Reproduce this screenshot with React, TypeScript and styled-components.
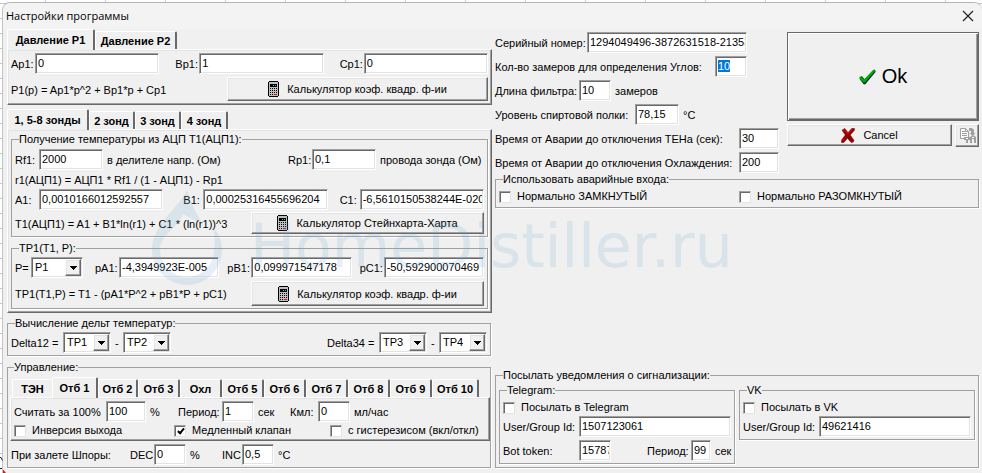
import React, { useEffect, useId, useRef } from "react";
import styled, { createGlobalStyle, css } from "styled-components";

const Global = createGlobalStyle`
  *, *::before, *::after { box-sizing: border-box; }
  body {
    margin: 0;
    background: #fff;
    color: #000;
    font: 11px/13px "Liberation Sans", Arial, sans-serif;
  }
  ::selection { background: #0078d7; color: #fff; }
`;

const raised = css`
  border: 1px solid;
  border-color: #fff #696969 #696969 #fff;
  box-shadow: inset -1px -1px 0 #a0a0a0, inset 1px 1px 0 #e3e3e3;
`;

const sunken = css`
  border: 1px solid;
  border-color: #a0a0a0 #fff #fff #a0a0a0;
  box-shadow: inset 1px 1px 0 #696969, inset -1px -1px 0 #e3e3e3;
`;

const Sheet = styled.div`
  position: relative;
  min-height: 100vh;
  padding: 2px 0 0 2px;
  overflow: hidden;
  background-color: #fff;
  background-image:
    repeating-linear-gradient(90deg, transparent 0 45px, #d0d0d0 45px 46px, transparent 46px 60px),
    repeating-linear-gradient(180deg, transparent 0 3px, #c8c8c8 3px 4px, transparent 4px 15px);
`;

const SheetChart = styled.svg`
  position: absolute;
  left: 0;
  bottom: 0;
`;

const Dialog = styled.main`
  position: relative;
  min-height: calc(100vh - 2px);
  background: #f0f0f0;
  border-top: 1px solid #b4b4b4;
  border-left: 1px solid #c4c4c4;
  border-radius: 8px 8px 0 0;
`;

const TitleBar = styled.header`
  display: flex;
  align-items: center;
  justify-content: space-between;
  height: 26px;
  padding: 0 8px 0 3px;
  background: #f3f3f3;
  border-radius: 8px 8px 0 0;
`;

const Title = styled.h1`
  margin: 0;
  font: 400 11px/16px "Open Sans", "Noto Sans", sans-serif;
`;

const CloseButton = styled.button`
  display: flex;
  padding: 0;
  border: 0;
  background: none;
`;

const Body = styled.form`
  display: grid;
  grid-template-columns: minmax(0, 1fr) minmax(0, 1fr);
  gap: 4px;
  padding: 0 3px 4px 4px;
`;

const Column = styled.div`
  display: flex;
  flex-direction: column;
  min-width: 0;
`;

const TabStrip = styled.div<{ $inset?: boolean }>`
  display: flex;
  align-items: flex-end;
  height: 20px;
  padding-left: ${(p) => (p.$inset ? 2 : 0)}px;
  margin-top: ${(p) => (p.$inset ? 3 : 0)}px;
`;

const TabButton = styled.button<{ $active?: boolean; $width: number; $flat?: boolean }>`
  position: relative;
  flex: 0 0 ${(p) => p.$width}px;
  height: ${(p) => (p.$active ? 21 : 18)}px;
  margin-bottom: ${(p) => (p.$active ? -1 : 0)}px;
  padding: 0;
  z-index: ${(p) => (p.$active ? 1 : 0)};
  background: #f0f0f0;
  border: 0 solid;
  border-width: 1px ${(p) => (p.$flat ? 0 : 2)}px 0 1px;
  border-color: #fff #696969 #fff #fff;
  border-radius: 2px 2px 0 0;
  color: #000;
  font: 700 11px/14px "Liberation Sans", Arial, sans-serif;
  white-space: nowrap;
`;

const Page = styled.div<{ $narrow?: boolean }>`
  ${raised}
  display: flex;
  flex-direction: column;
  padding: 3px;
  margin-right: ${(p) => (p.$narrow ? 0 : -1)}px;
`;

const Group = styled.fieldset<{ $gap?: number; $pad?: string }>`
  min-width: 0;
  margin: ${(p) => p.$gap ?? 0}px 0 0;
  padding: ${(p) => p.$pad ?? "2px 3px"};
  border: 1px solid #a0a0a0;
  box-shadow: 1px 1px 0 #fff;
`;

const Legend = styled.legend`
  margin-left: 4px;
  padding: 0;
  line-height: 13px;
`;

const Line = styled.div<{ $cols?: string; $gap?: number; $height?: number }>`
  display: grid;
  grid-template-columns: ${(p) => p.$cols ?? "1fr"};
  align-items: center;
  min-height: ${(p) => p.$height ?? 21}px;
  margin-top: ${(p) => p.$gap ?? 0}px;
  white-space: nowrap;
`;

const Text = styled.span<{ $indent?: number }>`
  padding: 2px 0 0 ${(p) => p.$indent ?? 0}px;
`;

const Caption = styled.label`
  padding-top: 2px;
  white-space: nowrap;
`;

const Input = styled.input`
  ${sunken}
  width: 100%;
  min-width: 0;
  height: 21px;
  padding: 0 1px 2px 2px;
  border-radius: 0;
  outline: none;
  background: #fff;
  color: #000;
  font: inherit;
`;

const SelectShell = styled.span`
  position: relative;
  display: block;
  height: 21px;
`;

const SelectBox = styled.select`
  ${sunken}
  appearance: none;
  display: block;
  width: 100%;
  height: 21px;
  padding: 0 0 0 3px;
  border-radius: 0;
  background: #fff;
  color: #000;
  font: inherit;
`;

const Arrow = styled.span`
  ${raised}
  position: absolute;
  top: 2px;
  right: 2px;
  display: flex;
  align-items: center;
  justify-content: center;
  width: 16px;
  height: 17px;
  background: #f0f0f0;
  pointer-events: none;
`;

const CheckLabel = styled.label`
  display: flex;
  align-items: center;
  gap: 6px;
  height: 13px;
  white-space: nowrap;
`;

const CheckInput = styled.input`
  appearance: none;
  position: relative;
  flex: none;
  width: 12px;
  height: 12px;
  margin: 0;
  background: #fff;
  border: 1px solid;
  border-color: #a0a0a0 #e3e3e3 #e3e3e3 #a0a0a0;
  box-shadow: inset 1px 1px 0 #696969;
  &:checked::after {
    content: "";
    position: absolute;
    left: 4px;
    top: 1px;
    width: 4px;
    height: 7px;
    border: solid #000;
    border-width: 0 2px 2px 0;
    transform: rotate(40deg);
  }
`;

const PushButton = styled.button<{ $height: number; $big?: boolean; $gap?: number }>`
  ${raised}
  display: flex;
  align-items: center;
  justify-content: center;
  gap: ${(p) => p.$gap ?? 8}px;
  width: 100%;
  height: ${(p) => p.$height}px;
  padding: 0;
  background: #f0f0f0;
  color: #000;
  font-family: "Liberation Sans", Arial, sans-serif;
  font-size: ${(p) => (p.$big ? 20 : 11)}px;
  ${(p) =>
    p.$big &&
    css`
      border-color: #696969;
      box-shadow: inset 1px 1px 0 #fff, inset -1px -1px 0 #696969, inset -2px -2px 0 #a0a0a0;
    `}
`;

const Upper = styled.div`
  display: grid;
  grid-template-columns: minmax(0, 1fr) 192px;
  gap: 4px;
  padding-top: 3px;
`;

const Stack = styled.div`
  display: flex;
  flex-direction: column;
  gap: 3px;
  min-width: 0;
`;

const CancelRow = styled.div`
  display: grid;
  grid-template-columns: minmax(0, 1fr) 24px;
  gap: 3px;
`;

const Bottom = styled.div`
  margin-top: auto;
`;

const Pair = styled.div`
  display: grid;
  grid-template-columns: minmax(0, 1fr) minmax(0, 1fr);
  align-items: start;
  gap: 4px;
`;

const Watermark = styled.div`
  position: absolute;
  left: 142px;
  top: 182px;
  display: flex;
  gap: 20px;
  color: #6fa5d2;
  opacity: 0.17;
  font: 60px/122px "DejaVu Sans", Verdana, sans-serif;
  white-space: nowrap;
  pointer-events: none;
`;

const Calculator = () => (
  <svg width="11" height="16" viewBox="0 0 11 16" shapeRendering="crispEdges" aria-hidden="true">
    <path d="M1 0h9v1h1v14h-1v1H1v-1H0V1h1z" fill="#000" />
    <rect x="1" y="1" width="9" height="14" fill="#c0c0c0" />
    <rect x="2" y="3" width="7" height="3" fill="#000" />
    <path d="M5 4h1v1h-1zM7 4h1v1h-1z" fill="#00d8d8" />
    <path d="M2 7h1v1h-1zM4 7h1v1h-1zM6 7h1v1h-1zM8 7h1v1h-1zM2 9h1v1h-1zM4 9h1v1h-1zM6 9h1v1h-1zM8 9h1v1h-1zM2 11h1v1h-1zM4 11h1v1h-1zM6 11h1v1h-1zM8 11h1v1h-1zM2 13h1v1h-1zM4 13h1v1h-1z" fill="#000" />
    <path d="M6 13h3v1h-3z" fill="#f00" />
  </svg>
);

const Tick = () => (
  <svg width="17" height="16" viewBox="0 0 17 16" aria-hidden="true">
    <path d="M1 8.500 3 7.500 6 10.500 14.500 1.500 16.500 1.500 16.500 3 6 15.500 4.500 15 1 10.500z" fill="#000060" />
    <path d="M.500 8 2.500 7 5.500 10 14 1 16 .500 16 2.500 5.500 14.500 4 13.500 .500 10z" fill="#008f00" />
    <path d="M1.500 8.500 5 12 15 1.800" stroke="#00b400" strokeWidth="1.300" fill="none" />
  </svg>
);

const Cross = () => (
  <svg width="14" height="15" viewBox="0 0 13 14" aria-hidden="true">
    <path d="M1 2 3.500 .500 6.500 4.500 10 .500 12.500 .500 12.500 2 8.500 6.500 12 11.500 11.500 13 9.500 13.500 6 9.500 2.500 13.500 .500 13.500 .500 11.500 4 6.500z" fill="#900000" stroke="#900000" strokeWidth=".6" />
    <path d="M2 2.500 3.500 1.500 6.500 5.500 10.500 1.500" stroke="#e00000" strokeWidth="1" fill="none" />
    <path d="M1.500 12.500 5 8.500" stroke="#c00000" fill="none" />
  </svg>
);

const CopyGlyph = () => (
  <svg width="17" height="17" viewBox="0 0 17 17" aria-hidden="true">
    <path d="M1.500 1.500h5l3 3v7h-8z" fill="#fafafa" stroke="#a0a0a0" />
    <path d="M3 4.500h3M3 6.500h5M3 8.500h5M6.500 1.500v3h3" stroke="#a0a0a0" fill="none" />
    <path d="M10 1h3l2 2v3h1.500L13.500 9 10.500 6H12V4h-2z" fill="#a0a0a0" />
    <path d="M5 10h6v3H9v3H7v-3H5zM11 10l3-2 3 2v6h-2v-4h-2v4h-2z" fill="#a0a0a0" />
    <path d="M7 11.500h2M13 10.500h2" stroke="#fff" />
  </svg>
);

const CloseGlyph = () => (
  <svg width="12" height="12" viewBox="0 0 12 12" aria-hidden="true">
    <path d="M1 1 11 11M11 1 1 11" stroke="#222" strokeWidth="1.200" />
  </svg>
);

const DropLogo = () => (
  <svg width="85" height="106" viewBox="0 0 85 106" aria-hidden="true">
    <path
      fill="currentColor"
      fillRule="evenodd"
      d="M42 5C34 23 7 40 7 65a35 35 0 0 0 70 0C77 56 74 49 67 41 70 50 70 56 69 65a27 27 0 0 1-54 0C15 50 32 44 38 29 44 33 52 36 58 39 51 29 46 18 42 5z"
    />
  </svg>
);

type FieldProps = { label: string; value: string; focus?: boolean };

/** A caption and its text box, as two neighbouring cells of a Line. */
const Field = ({ label, value, focus }: FieldProps) => {
  const id = useId();
  const ref = useRef<HTMLInputElement>(null);
  useEffect(() => {
    if (focus) {
      ref.current?.focus();
      ref.current?.select();
    }
  }, [focus]);
  return (
    <>
      <Caption htmlFor={id}>{label}</Caption>
      <Input id={id} ref={ref} defaultValue={value} />
    </>
  );
};

const Choice = ({ name, value, options }: { name: string; value: string; options: string[] }) => (
  <SelectShell>
    <SelectBox aria-label={name} defaultValue={value}>
      {options.map((o) => (
        <option key={o}>{o}</option>
      ))}
    </SelectBox>
    <Arrow>
      <svg width="7" height="4" viewBox="0 0 7 4" shapeRendering="crispEdges" aria-hidden="true">
        <path d="M0 0h7L3.500 4z" />
      </svg>
    </Arrow>
  </SelectShell>
);

const Check = ({ label, checked }: { label: string; checked?: boolean }) => (
  <CheckLabel>
    <CheckInput type="checkbox" defaultChecked={checked} />
    {label}
  </CheckLabel>
);

const Tabs = ({ items, active, inset }: { items: [string, number][]; active: number; inset?: boolean }) => (
  <TabStrip role="tablist" $inset={inset}>
    {items.map(([name, width], i) => (
      <TabButton
        key={name}
        type="button"
        role="tab"
        aria-selected={i === active}
        $active={i === active}
        $flat={i === active - 1}
        $width={width}
      >
        {name}
      </TabButton>
    ))}
  </TabStrip>
);

const CalcButton = ({ label, height }: { label: string; height: number }) => (
  <PushButton type="button" $height={height}>
    <Calculator />
    {label}
  </PushButton>
);

const temps = ["TP1", "TP2", "TP3", "TP4"];

const outputTabs: [string, number][] = [
  ["ТЭН", 40],
  ["Отб 1", 46],
  ["Отб 2", 40],
  ["Отб 3", 42],
  ["Охл", 42],
  ["Отб 5", 42],
  ["Отб 6", 42],
  ["Отб 7", 42],
  ["Отб 8", 42],
  ["Отб 9", 42],
  ["Отб 10", 47],
];

export default function App() {
  return (
    <>
      <Global />
      <Sheet>
        <Dialog>
          <TitleBar>
            <Title>Настройки программы</Title>
            <CloseButton type="button" aria-label="Закрыть">
              <CloseGlyph />
            </CloseButton>
          </TitleBar>
          <Body onSubmit={(e) => e.preventDefault()}>
            <Column>
              <Tabs items={[["Давление P1", 88], ["Давление P2", 82]]} active={0} />
              <Page>
                <Line $cols="24px 1fr 16px 24px 1fr 16px 24px 1fr">
                  <Field label="Ap1:" value="0" />
                  <span />
                  <Field label="Bp1:" value="1" />
                  <span />
                  <Field label="Cp1:" value="0" />
                </Line>
                <Line $cols="216px 1fr" $gap={3} $height={24}>
                  <Text>P1(p) = Ap1*p^2 + Bp1*p + Cp1</Text>
                  <CalcButton label="Калькулятор коэф. квадр. ф-ии" height={24} />
                </Line>
              </Page>

              <Line $height={4} />
              <Tabs items={[["1, 5-8 зонды", 82], ["2 зонд", 46], ["3 зонд", 46], ["4 зонд", 47]]} active={0} />
              <Page>
                <Group $pad="3px 3px 2px">
                  <Legend>Получение температуры из АЦП T1(АЦП1):</Legend>
                  <Line $cols="24px 64px 1fr 24px 64px 108px">
                    <Field label="Rf1:" value="2000" />
                    <Text $indent={4}>в делителе напр. (Ом)</Text>
                    <Field label="Rp1:" value="0,1" />
                    <Text $indent={4}>провода зонда (Ом)</Text>
                  </Line>
                  <Line $height={19}>
                    <Text>r1(АЦП1) = АЦП1 * Rf1 / (1 - АЦП1) - Rp1</Text>
                  </Line>
                  <Line $cols="24px 1fr 20px 20px 1fr 12px 20px 1fr">
                    <Field label="A1:" value="0,0010166012592557" />
                    <span />
                    <Field label="B1:" value="0,00025316455696204" />
                    <span />
                    <Field label="C1:" value="-6,5610150538244E-020" />
                  </Line>
                  <Line $cols="236px 1fr" $gap={2} $height={22}>
                    <Text>T1(АЦП1) = A1 + B1*ln(r1) + C1 * (ln(r1))^3</Text>
                    <CalcButton label="Калькулятор Стейнхарта-Харта" height={22} />
                  </Line>
                </Group>
                <Group $gap={5}>
                  <Legend>ТР1(T1, P):</Legend>
                  <Line $cols="16px 52px 12px 24px 1fr 8px 24px 1fr 8px 24px 1fr">
                    <Text>P=</Text>
                    <Choice name="P" value="P1" options={["P1", "P2"]} />
                    <span />
                    <Field label="pA1:" value="-4,3949923E-005" />
                    <span />
                    <Field label="pB1:" value="0,099971547178" />
                    <span />
                    <Field label="pC1:" value="-50,592900070469" />
                  </Line>
                  <Line $cols="236px 1fr" $gap={3} $height={25}>
                    <Text>TP1(T1,P) = T1 - (pA1*P^2 + pB1*P + pC1)</Text>
                    <CalcButton label="Калькулятор коэф. квадр. ф-ии" height={25} />
                  </Line>
                </Group>
              </Page>

              <Group $gap={4}>
                <Legend>Вычисление дельт температур:</Legend>
                <Line $cols="52px 48px 12px 48px 1fr 52px 48px 12px 48px">
                  <Text>Delta12 =</Text>
                  <Choice name="Delta12, первая" value="TP1" options={temps} />
                  <Text $indent={4}>-</Text>
                  <Choice name="Delta12, вторая" value="TP2" options={temps} />
                  <span />
                  <Text>Delta34 =</Text>
                  <Choice name="Delta34, первая" value="TP3" options={temps} />
                  <Text $indent={4}>-</Text>
                  <Choice name="Delta34, вторая" value="TP4" options={temps} />
                </Line>
              </Group>

              <Group $gap={5} $pad="0 0 2px 2px">
                <Legend>Управление:</Legend>
                <Tabs items={outputTabs} active={1} inset />
                <Page $narrow>
                  <Line $cols="92px 40px 32px 44px 32px 36px 28px 32px auto">
                    <Field label="Считать за 100%" value="100" />
                    <Text $indent={4}>%</Text>
                    <Field label="Период:" value="1" />
                    <Text $indent={4}>сек</Text>
                    <Field label="Кмл:" value="0" />
                    <Text $indent={4}>мл/час</Text>
                  </Line>
                  <Line $cols="160px 156px auto" $gap={2} $height={13}>
                    <Check label="Инверсия выхода" />
                    <Check label="Медленный клапан" checked />
                    <Check label="с гистерезисом (вкл/откл)" />
                  </Line>
                </Page>
                <Line $cols="120px 24px 32px 36px 20px 32px auto" $gap={3}>
                  <Text $indent={1}>При залете Шпоры:</Text>
                  <Field label="DEC" value="0" />
                  <Text $indent={4}>%</Text>
                  <Field label="INC" value="0,5" />
                  <Text $indent={4}>°C</Text>
                </Line>
              </Group>
            </Column>

            <Column>
              <Upper>
                <Stack>
                  <Line $cols="92px 160px">
                    <Field label="Серийный номер:" value="1294049496-3872631518-21353" />
                  </Line>
                  <Line $cols="220px 32px">
                    <Field label="Кол-во замеров для определения Углов:" value="10" focus />
                  </Line>
                  <Line $cols="84px 32px auto">
                    <Field label="Длина фильтра:" value="10" />
                    <Text $indent={4}>замеров</Text>
                  </Line>
                  <Line $cols="140px 44px auto">
                    <Field label="Уровень спиртовой полки:" value="78,15" />
                    <Text $indent={4}>°C</Text>
                  </Line>
                  <Line $cols="244px 40px">
                    <Field label="Время от Аварии до отключения ТЕНа (сек):" value="30" />
                  </Line>
                  <Line $cols="244px 40px">
                    <Field label="Время от Аварии до отключения Охлаждения:" value="200" />
                  </Line>
                </Stack>
                <Stack>
                  <PushButton type="submit" $height={89} $big $gap={6}>
                    <Tick />
                    Ok
                  </PushButton>
                  <CancelRow>
                    <PushButton type="button" $height={22}>
                      <Cross />
                      Cancel
                    </PushButton>
                    <PushButton type="button" $height={23} aria-label="Копировать">
                      <CopyGlyph />
                    </PushButton>
                  </CancelRow>
                </Stack>
              </Upper>
              <Group $pad="4px 3px">
                <Legend>Использовать аварийные входа:</Legend>
                <Pair>
                  <Check label="Нормально ЗАМКНУТЫЙ" />
                  <Check label="Нормально РАЗОМКНУТЫЙ" />
                </Pair>
              </Group>
              <Bottom>
                <Group $pad="2px 3px 3px">
                  <Legend>Посылать уведомления о сигнализации:</Legend>
                  <Pair>
                    <Group $pad="4px 3px 2px">
                      <Legend>Telegram:</Legend>
                      <Check label="Посылать в Telegram" />
                      <Line $cols="76px 1fr" $gap={2}>
                        <Field label="User/Group Id:" value="1507123061" />
                      </Line>
                      <Line $cols="76px 32px 1fr 44px 20px 20px" $gap={3}>
                        <Field label="Bot token:" value="15787" />
                        <span />
                        <Field label="Период:" value="99" />
                        <Text $indent={4}>сек</Text>
                      </Line>
                    </Group>
                    <Group $pad="4px 3px 2px">
                      <Legend>VK</Legend>
                      <Check label="Посылать в VK" />
                      <Line $cols="76px 1fr" $gap={2}>
                        <Field label="User/Group Id:" value="49621416" />
                      </Line>
                    </Group>
                  </Pair>
                </Group>
              </Bottom>
            </Column>
          </Body>
          <Watermark aria-hidden="true">
            <DropLogo />
            HomeDistiller.ru
          </Watermark>
        </Dialog>
        <SheetChart width="8" height="18" viewBox="0 0 8 18" aria-hidden="true">
          <path d="M0 2.500h1l1.500 3M0 13.500h2" stroke="#222" fill="none" />
          <path d="M3 14.500l3 3.500H3z" fill="#e81010" />
        </SheetChart>
      </Sheet>
    </>
  );
}
